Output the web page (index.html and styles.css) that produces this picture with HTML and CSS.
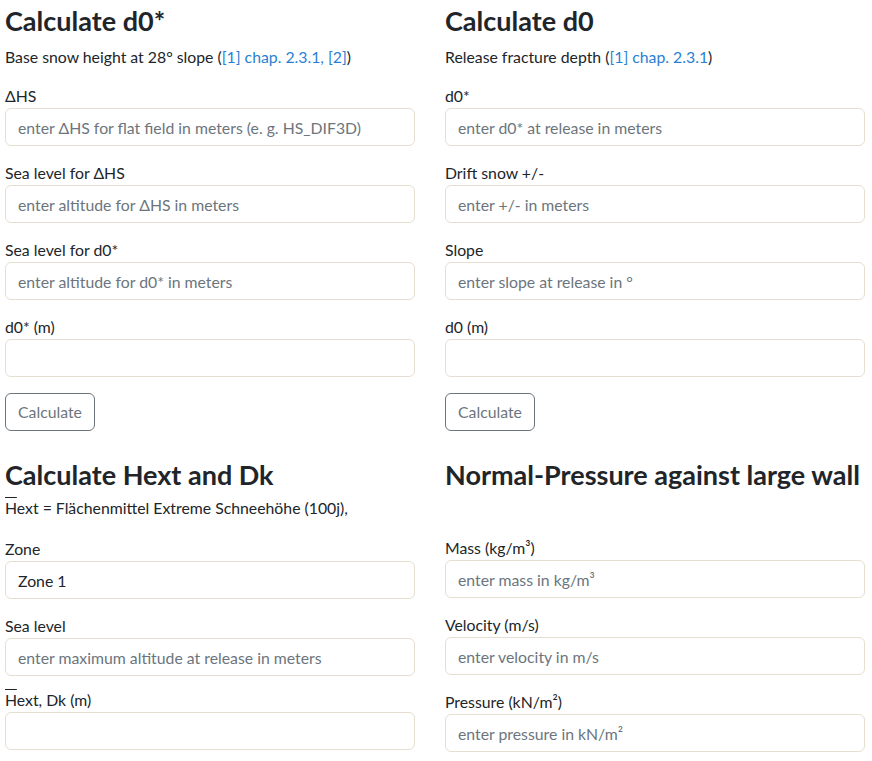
FILE: index.html
```
<!DOCTYPE html>
<html lang="en">
<head>
<meta charset="utf-8">
<title>Snow calculator</title>
<link rel="stylesheet" href="styles.css">
</head>
<body>
<div class="page">
  <section class="block">
    <h3 class="title">Calculate d0*</h3>
    <p class="sub">Base snow height at 28° slope (<a href="#">[1] chap. 2.3.1, [2]</a>)</p>
    <div class="field"><label class="lbl">ΔHS</label><input class="ctl" type="text" placeholder="enter ΔHS for flat field in meters (e. g. HS_DIF3D)"></div>
    <div class="field"><label class="lbl">Sea level for ΔHS</label><input class="ctl" type="text" placeholder="enter altitude for ΔHS in meters"></div>
    <div class="field"><label class="lbl">Sea level for d0*</label><input class="ctl" type="text" placeholder="enter altitude for d0* in meters"></div>
    <div class="field"><label class="lbl">d0* (m)</label><input class="ctl" type="text"></div>
    <button class="btn" type="button">Calculate</button>
  </section>
  <section class="block">
    <h3 class="title">Calculate d0</h3>
    <p class="sub">Release fracture depth (<a href="#">[1] chap. 2.3.1</a>)</p>
    <div class="field"><label class="lbl">d0*</label><input class="ctl" type="text" placeholder="enter d0* at release in meters"></div>
    <div class="field"><label class="lbl">Drift snow +/-</label><input class="ctl" type="text" placeholder="enter +/- in meters"></div>
    <div class="field"><label class="lbl">Slope</label><input class="ctl" type="text" placeholder="enter slope at release in °"></div>
    <div class="field"><label class="lbl">d0 (m)</label><input class="ctl" type="text"></div>
    <button class="btn" type="button">Calculate</button>
  </section>
  <section class="block">
    <h3 class="title tight">Calculate Hext and Dk</h3>
    <p class="sub sub-l"><span class="ol">H</span>ext = Flächenmittel Extreme Schneehöhe (100j),</p>
    <div class="field"><label class="lbl">Zone</label><input class="ctl val" type="text" value="Zone 1"></div>
    <div class="field short"><label class="lbl">Sea level</label><input class="ctl" type="text" placeholder="enter maximum altitude at release in meters"></div>
    <div class="field"><label class="lbl"><span class="ol">H</span>ext, Dk (m)</label><input class="ctl" type="text"></div>
  </section>
  <section class="block">
    <h3 class="title tight nowrap">Normal-Pressure against large wall</h3>
    <p class="sub empty">&nbsp;</p>
    <div class="field"><label class="lbl">Mass (kg/m³)</label><input class="ctl" type="text" placeholder="enter mass in kg/m³"></div>
    <div class="field"><label class="lbl">Velocity (m/s)</label><input class="ctl" type="text" placeholder="enter velocity in m/s"></div>
    <div class="field"><label class="lbl">Pressure (kN/m²)</label><input class="ctl" type="text" placeholder="enter pressure in kN/m²"></div>
  </section>
</div>
</body>
</html>
```
FILE: styles.css
```
*{box-sizing:border-box}
html,body{margin:0;padding:0;background:#fff}
body{font-family:Lato,"Liberation Sans",sans-serif;font-size:15.8px;line-height:24px;color:#212529}
.page{display:grid;grid-template-columns:410px 420px;column-gap:30px;row-gap:27px;padding:4px 7px 0 5px;align-items:start}
.block{display:flex;flex-direction:column;align-items:stretch}
.title{margin:0 0 7px;font-size:27px;line-height:34px;font-weight:700;color:#212529}
.title.tight{margin-bottom:4px}
.nowrap{white-space:nowrap}
.sub{margin:0 0 15px;line-height:24px}
.sub-l{margin-bottom:17px}
.empty{margin-bottom:16px}
.sub a{color:#2a7fd4;text-decoration:none}
.ol{text-decoration:overline;text-decoration-thickness:1px}
.field{display:flex;flex-direction:column;margin-bottom:15px}
.field.short{margin-bottom:12px}
.lbl{display:block;line-height:24px}
.ctl{display:block;width:100%;height:38px;padding:6px 12px;border:1px solid #e6dfd1;border-radius:6px;font-family:inherit;font-size:15.8px;line-height:24px;color:#212529;background:#fff;outline:none}
.ctl::placeholder{color:#6c757d;opacity:1}
.btn{align-self:flex-start;margin-top:1px;height:38px;padding:6px 12px;border:1px solid #6c757d;border-radius:6px;background:#fff;color:#6c757d;font-family:inherit;font-size:15.8px;line-height:24px;cursor:pointer}
```
